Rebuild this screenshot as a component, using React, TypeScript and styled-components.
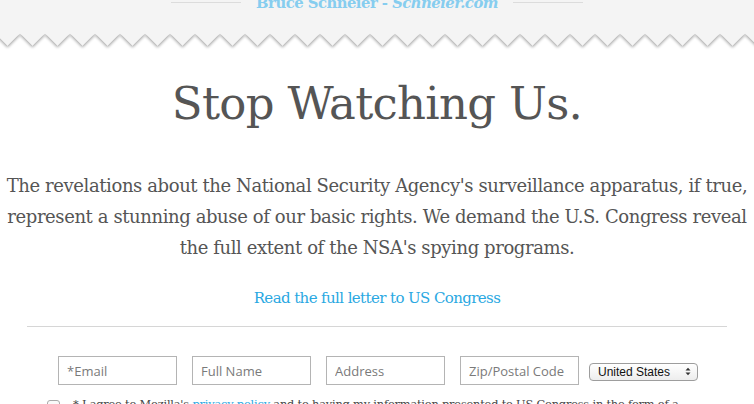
import React from "react";
import styled, { createGlobalStyle } from "styled-components";

const GlobalStyle = createGlobalStyle`
  html, body {
    margin: 0;
    padding: 0;
    background: #fff;
    overflow: hidden;
  }
  body {
    font-family: "DejaVu Serif", Georgia, serif;
  }
`;

const Page = styled.div`
  width: 754px;
  height: 404px;
  overflow: hidden;
  display: flex;
  flex-direction: column;
`;

const Masthead = styled.header`
  position: relative;
  height: 33px;
  background: #f4f4f4;
  flex-shrink: 0;
`;

const Byline = styled.div`
  display: flex;
  align-items: center;
  justify-content: center;
  gap: 15px;
  margin-top: -9px;
  height: 22px;
`;

const Rule = styled.span`
  display: block;
  width: 70px;
  height: 1px;
  background: #dcdcdc;
`;

const BylineText = styled.span`
  font-family: "DejaVu Serif", Georgia, serif;
  font-weight: bold;
  font-size: 14.8px;
  letter-spacing: -0.5px;
  color: #86cdef;
  white-space: nowrap;

  em {
    font-style: italic;
  }
`;

const Teeth = styled.svg`
  position: absolute;
  left: 0;
  top: calc(100% - 1px);
  display: block;
`;

const Main = styled.main`
  display: flex;
  flex-direction: column;
  align-items: center;
  padding-top: 44px;
`;

const Title = styled.h1`
  margin: 0;
  font-family: "DejaVu Serif", Georgia, serif;
  font-weight: normal;
  font-size: 45px;
  line-height: 54px;
  color: #555;
  letter-spacing: -0.7px;
  white-space: nowrap;
`;

const Lead = styled.p`
  margin: 39px 0 0;
  font-family: "DejaVu Serif", Georgia, serif;
  font-size: 18px;
  line-height: 31px;
  color: #555;
  text-align: center;
  letter-spacing: -0.4px;
  white-space: nowrap;
`;

const LetterLink = styled.a`
  margin-top: 25px;
  font-family: "DejaVu Serif", Georgia, serif;
  font-size: 15px;
  line-height: 20px;
  color: #2aa8e2;
  text-decoration: none;
  letter-spacing: -0.6px;
`;

const Divider = styled.hr`
  width: 700px;
  margin: 18px 0 0;
  border: 0;
  border-top: 1px solid #d6d6d6;
`;

const Form = styled.form`
  display: flex;
  flex-direction: column;
  align-items: flex-start;
  width: 700px;
  margin-top: 29px;
`;

const FieldRow = styled.div`
  display: flex;
  align-items: center;
  gap: 15px;
  padding-left: 31px;
`;

const Field = styled.input`
  box-sizing: border-box;
  width: 119px;
  height: 29px;
  padding: 0 8px;
  border: 1px solid #b4b4b4;
  border-radius: 0;
  font-family: "Open Sans", "DejaVu Sans", sans-serif;
  font-size: 13px;
  color: #444;
  background: #fff;
  outline: none;

  &::placeholder {
    color: #7a7a7a;
  }
`;

const Select = styled.div`
  box-sizing: border-box;
  width: 109px;
  height: 18px;
  margin-left: -5px;
  margin-top: 2px;
  padding: 0 6px 0 8px;
  display: flex;
  align-items: center;
  justify-content: space-between;
  border: 1px solid #9d9d9d;
  border-radius: 4px;
  background: linear-gradient(#ffffff, #ededed);
  font-family: "Liberation Sans", Arial, sans-serif;
  font-size: 12px;
  color: #111;
`;

const Agree = styled.label`
  display: flex;
  align-items: flex-start;
  gap: 13px;
  margin-top: 10px;
  padding-left: 20px;
  font-family: "DejaVu Serif", Georgia, serif;
  font-size: 11.4px;
  line-height: 18px;
  letter-spacing: -0.2px;
  color: #444;
  white-space: nowrap;

  a {
    color: #2aa8e2;
    text-decoration: none;
  }
`;

const Box = styled.span`
  display: block;
  width: 11px;
  height: 11px;
  margin-top: 5px;
  border: 1px solid #aaa;
  border-radius: 3px;
  background: #fafafa;
`;

const ToothEdge: React.FC = () => {
  const count = 32;
  let d = "M0 0 L0 1";
  for (let i = 0; i < count; i++) {
    const x = i * 25 - 5;
    d += ` L${x} 1 L${x + 12.5} 13.5 L${x + 25} 1`;
  }
  d += " L800 0 Z";
  return (
    <Teeth width="754" height="20" viewBox="0 0 754 20">
      <defs>
        <filter id="toothShadow" x="-5%" y="-50%" width="110%" height="200%">
          <feGaussianBlur in="SourceAlpha" stdDeviation="1.4" />
          <feOffset dy="1.5" />
          <feComponentTransfer>
            <feFuncA type="linear" slope="0.35" />
          </feComponentTransfer>
          <feMerge>
            <feMergeNode />
            <feMergeNode in="SourceGraphic" />
          </feMerge>
        </filter>
      </defs>
      <path d={d} fill="#f4f4f4" filter="url(#toothShadow)" />
    </Teeth>
  );
};

const App: React.FC = () => {
  return (
    <Page>
      <GlobalStyle />
      <Masthead>
        <Byline>
          <Rule />
          <BylineText>
            Bruce Schneier - <em>Schneier.com</em>
          </BylineText>
          <Rule />
        </Byline>
        <ToothEdge />
      </Masthead>
      <Main>
        <Title>Stop Watching Us.</Title>
        <Lead>
          The revelations about the National Security Agency's surveillance apparatus, if true,
          <br />
          represent a stunning abuse of our basic rights. We demand the U.S. Congress reveal
          <br />
          the full extent of the NSA's spying programs.
        </Lead>
        <LetterLink href="#">Read the full letter to US Congress</LetterLink>
        <Divider />
        <Form>
          <FieldRow>
            <Field placeholder="*Email" />
            <Field placeholder="Full Name" />
            <Field placeholder="Address" />
            <Field placeholder="Zip/Postal Code" />
            <Select>
              <span>United States</span>
              <svg width="6" height="9" viewBox="0 0 6 9">
                <path d="M0.5 3.5 L3 0.8 L5.5 3.5 Z M0.5 5.5 L3 8.2 L5.5 5.5 Z" fill="#333" />
              </svg>
            </Select>
          </FieldRow>
          <Agree>
            <Box />
            <span>
              * I agree to Mozilla's <a href="#">privacy policy</a> and to having my information
              presented to US Congress in the form of a
            </span>
          </Agree>
        </Form>
      </Main>
    </Page>
  );
};

export default App;
